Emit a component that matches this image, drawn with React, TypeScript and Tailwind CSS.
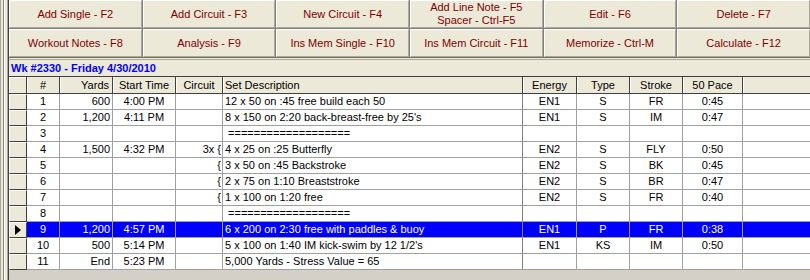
const BUTTONS = [
  ["Add Single - F2"],
  ["Add Circuit - F3"],
  ["New Circuit - F4"],
  ["Add Line Note - F5", "Spacer - Ctrl-F5"],
  ["Edit - F6"],
  ["Delete - F7"],
  ["Workout Notes - F8"],
  ["Analysis - F9"],
  ["Ins Mem Single - F10"],
  ["Ins Mem Circuit - F11"],
  ["Memorize - Ctrl-M"],
  ["Calculate - F12"],
];

const EQ = " ===================";

type Row = {
  n: string;
  yards: string;
  start: string;
  circuit: string;
  desc: string;
  energy: string;
  type: string;
  stroke: string;
  pace: string;
};

const row = (
  n: string,
  yards = "",
  start = "",
  circuit = "",
  desc = "",
  energy = "",
  type = "",
  stroke = "",
  pace = "",
): Row => ({ n, yards, start, circuit, desc, energy, type, stroke, pace });

const ROWS: Row[] = [
  row("1", "600", "4:00 PM", "", "12 x 50 on :45 free build each 50", "EN1", "S", "FR", "0:45"),
  row("2", "1,200", "4:11 PM", "", "8 x 150 on 2:20 back-breast-free by 25's", "EN1", "S", "IM", "0:47"),
  row("3", "", "", "", EQ),
  row("4", "1,500", "4:32 PM", "3x {", "4 x 25 on :25 Butterfly", "EN2", "S", "FLY", "0:50"),
  row("5", "", "", "{", "3 x 50 on :45 Backstroke", "EN2", "S", "BK", "0:45"),
  row("6", "", "", "{", "2 x 75 on 1:10 Breaststroke", "EN2", "S", "BR", "0:47"),
  row("7", "", "", "{", "1 x 100 on 1:20 free", "EN2", "S", "FR", "0:40"),
  row("8", "", "", "", EQ),
  row("9", "1,200", "4:57 PM", "", "6 x 200 on 2:30 free with paddles & buoy", "EN1", "P", "FR", "0:38"),
  row("10", "500", "5:14 PM", "", "5 x 100 on 1:40 IM kick-swim by 12 1/2's", "EN1", "KS", "IM", "0:50"),
  row("11", "End", "5:23 PM", "", "5,000 Yards - Stress Value = 65"),
];

const SELECTED = 8;

// selector | # | Yards | Start | Circuit | Set Description | Energy | Type | Stroke | 50 Pace | filler
const COLS =
  "grid grid-cols-[18px_33px_53px_63px_47px_300px_54px_53px_53px_60px_1fr]";

const HEADERS: [string, string][] = [
  ["#", "justify-center"],
  ["Yards", "justify-end pr-[3px]"],
  ["Start Time", "justify-center"],
  ["Circuit", "justify-center"],
  ["Set Description", "justify-start pl-[2px]"],
  ["Energy", "justify-center"],
  ["Type", "justify-center"],
  ["Stroke", "justify-center"],
  ["50 Pace", "justify-center"],
  ["", ""],
];

function Cell({
  children,
  align,
  dark,
}: {
  children?: React.ReactNode;
  align: string;
  dark?: boolean;
}) {
  return (
    <div
      className={`flex items-center h-[16px] border-b border-r whitespace-pre overflow-hidden ${align} ${
        dark ? "border-r-[#808080] border-b-[#a0a0a0]" : "border-[#a0a0a0]"
      }`}
    >
      {children}
    </div>
  );
}

function DataRow({ r, selected }: { r: Row; selected: boolean }) {
  return (
    <div
      className={`${COLS} ${selected ? "bg-[#0000ff] text-white" : "bg-white text-black"}`}
    >
      <div className="h-[16px] bg-[#ece9d8] border-t border-l border-t-white border-l-white border-b border-r border-b-[#404040] border-r-[#404040] flex items-center justify-center">
        {selected ? (
          <svg width="6" height="10" viewBox="0 0 6 10">
            <polygon points="0,0 6,5 0,10" fill="#000" />
          </svg>
        ) : null}
      </div>
      <Cell align="justify-center">{r.n}</Cell>
      <Cell align="justify-end pr-[2px]">{r.yards}</Cell>
      <Cell align="justify-center">{r.start}</Cell>
      <Cell align="justify-end pr-[1px]">{r.circuit}</Cell>
      <Cell align="justify-start pl-[2px]" dark>
        {r.desc}
      </Cell>
      <Cell align="justify-center">{r.energy}</Cell>
      <Cell align="justify-center">{r.type}</Cell>
      <Cell align="justify-center">{r.stroke}</Cell>
      <Cell align="justify-center">{r.pace}</Cell>
      <div className="h-[16px] border-b border-[#a0a0a0]" />
    </div>
  );
}

export default function App() {
  return (
    <div
      className="w-[810px] h-[280px] overflow-hidden bg-[#d4d0c8] flex text-[11px] leading-[13px]"
      style={{ fontFamily: '"Liberation Sans", Arial, sans-serif' }}
    >
      {/* left frame strip */}
      <div className="w-[9px] shrink-0 bg-[#ece9d8] flex">
        <div className="w-px bg-[#aca899]" />
        <div className="w-[2px]" />
        <div className="w-px bg-[#808080]" />
        <div className="w-px bg-white" />
        <div className="w-[2px]" />
        <div className="w-px bg-[#aca899]" />
        <div className="w-px bg-[#404040]" />
      </div>

      <div className="flex-1 flex flex-col">
        <div className="grid grid-cols-6 gap-px bg-[#808080]">
          {BUTTONS.map((lines, i) => (
            <button
              key={i}
              className="h-[28px] bg-[#ece9d8] border-t border-l border-white border-r border-b border-r-[#aca899] border-b-[#aca899] flex flex-col items-center justify-center text-[#800000] leading-[13px]"
            >
              {lines.map((l) => (
                <span key={l}>{l}</span>
              ))}
            </button>
          ))}
        </div>

        <div className="h-[3px] bg-[#ece9d8] border-t border-b border-t-[#716f64] border-b-[#aca899]" />

        <div className="h-[16px] bg-[#ece9d8] flex items-center pl-[2px] font-bold text-[#0000ff] text-[11px]">
          Wk #2330 - Friday 4/30/2010
        </div>

        <div className={`${COLS} bg-[#ece9d8] border-t border-[#404040]`}>
          <div className="h-[17px] border-r border-b border-[#404040] shadow-[inset_1px_1px_0_#ffffff]" />
          {HEADERS.map(([h, align], i) => (
            <div
              key={i}
              className={`h-[17px] flex items-center ${align} border-b border-b-[#404040] ${
                i < HEADERS.length - 1 ? "border-r border-r-[#404040]" : ""
              } shadow-[inset_1px_0_0_#ffffff]`}
            >
              {h}
            </div>
          ))}
        </div>

        {ROWS.map((r, i) => (
          <DataRow key={r.n} r={r} selected={i === SELECTED} />
        ))}
      </div>
    </div>
  );
}
